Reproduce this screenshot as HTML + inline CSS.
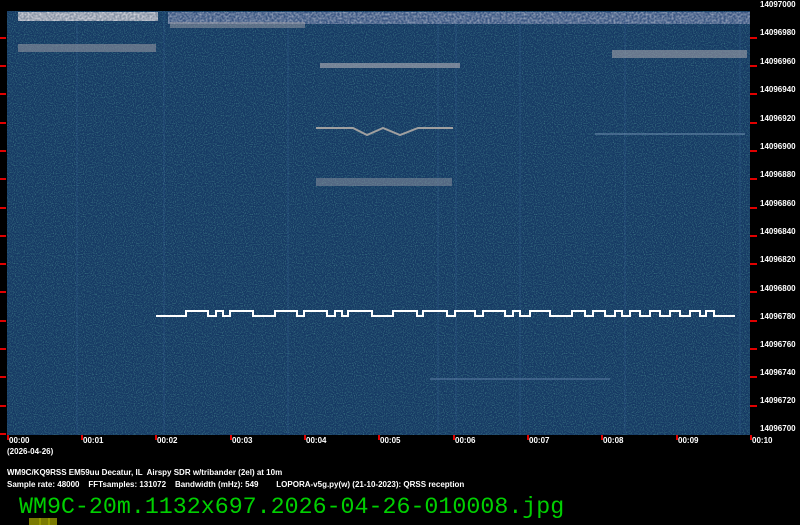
<!DOCTYPE html>
<html><head><meta charset="utf-8"><style>
html,body{margin:0;padding:0;background:#000;width:800px;height:525px;overflow:hidden;position:relative;font-family:"Liberation Sans",sans-serif}
.t{position:absolute;color:#fff;font-size:8px;font-weight:bold;white-space:pre;line-height:9px}
.fn{position:absolute;left:19px;top:494px;color:#00d000;font-family:"Liberation Mono",monospace;font-size:23.3px;white-space:pre}
</style></head><body>
<svg width="800" height="525" style="position:absolute;left:0;top:0">
<defs>
<filter id="n" x="0" y="0" width="100%" height="100%">
<feTurbulence type="fractalNoise" baseFrequency="0.9" numOctaves="1" seed="3"/>
<feColorMatrix values="0 0 0 0 0.1  0 0 0 0 0.36  0 0 0 0 0.38  0 0 0 2.2 -1.0"/>
</filter>
<filter id="g" x="0" y="0" width="100%" height="100%">
<feTurbulence type="fractalNoise" baseFrequency="0.5" numOctaves="1" seed="7"/>
<feColorMatrix values="0 0 0 0 0.75  0 0 0 0 0.75  0 0 0 0 0.8  0 0 0 1.8 -0.6"/>
</filter>
<clipPath id="wf"><rect x="7" y="11" width="743" height="424"/></clipPath>
</defs>
<rect x="7" y="11" width="743" height="424" fill="#14306a"/>
<rect x="7" y="11" width="743" height="424" filter="url(#n)"/>
<rect x="7" y="11" width="743" height="424" fill="#1a4a5a" opacity="0.35"/>
<g clip-path="url(#wf)" opacity="0.25" stroke="#4a78b0" stroke-width="1">
<line x1="77" y1="11" x2="77" y2="435"/><line x1="164" y1="11" x2="164" y2="435"/><line x1="288" y1="11" x2="288" y2="435"/><line x1="438" y1="11" x2="438" y2="435"/><line x1="456" y1="11" x2="456" y2="435"/><line x1="520" y1="11" x2="520" y2="435"/><line x1="625" y1="11" x2="625" y2="435"/><line x1="740" y1="11" x2="740" y2="435"/>
</g>
<g>
<rect x="18" y="12" width="140" height="9" fill="#b8b8c0" opacity="0.7"/>
<rect x="168" y="12" width="582" height="12" fill="#6070a0" opacity="0.5"/>
<rect x="168" y="12" width="582" height="12" filter="url(#g)" opacity="0.6"/>
<rect x="18" y="12" width="140" height="9" filter="url(#g)"/>
<rect x="170" y="22" width="135" height="6" fill="#a0a0a8" opacity="0.5"/>
<rect x="18" y="44" width="138" height="8" fill="#9a9aa4" opacity="0.55"/>
<rect x="320" y="63" width="140" height="5" fill="#a8a8b0" opacity="0.65"/>
<rect x="612" y="50" width="135" height="8" fill="#a0a0a8" opacity="0.6"/>
<rect x="316" y="178" width="136" height="8" fill="#a0a0a8" opacity="0.45"/>
<rect x="595" y="133" width="150" height="2" fill="#7090b0" opacity="0.5"/>
<rect x="430" y="378" width="180" height="2" fill="#6080a8" opacity="0.5"/>
</g>
<polyline points="316,128 353,128 367,135 383,128 400,135 418,128 453,128" fill="none" stroke="#a0a0a0" stroke-width="2"/>
<path fill="none" stroke="#fff" stroke-width="2" d="M156 316H186V311H208V316H216V311H223V316H230V311H253V316H275V311H297V316H304V311H327V316H335V311H342V316H348V311H372V316H393V311H417V316H423V311H447V316H455V311H475V316H483V311H505V316H513V311H520V316H530V311H550V316H572V311H585V316H593V311H605V316H615V311H622V316H630V311H640V316H650V311H660V316H670V311H680V316H690V311H700V316H706V311H714V316H735"/>
<g stroke="#e00000" stroke-width="2">
<path d="M0 38h6M0 66h6M0 94h6M0 123h6M0 151h6M0 179h6M0 208h6M0 236h6M0 264h6M0 292h6M0 321h6M0 349h6M0 377h6M0 406h6M0 434h6"/>
<path d="M750 38h7M750 66h7M750 94h7M750 123h7M750 151h7M750 179h7M750 208h7M750 236h7M750 264h7M750 292h7M750 321h7M750 349h7M750 377h7M750 406h7"/>
<path d="M8 435v5M82 435v5M156 435v5M231 435v5M305 435v5M379 435v5M454 435v5M528 435v5M602 435v5M677 435v5M751 435v5"/>
</g>
<rect x="29" y="518" width="28" height="7" fill="#7a7a00"/>
<path d="M40 518v7M49 518v7" stroke="#b0b000"/>
</svg>
<div class="t" style="left:760px;top:0">14097000</div>
<div class="t" style="left:760px;top:28px">14096980</div>
<div class="t" style="left:760px;top:57px">14096960</div>
<div class="t" style="left:760px;top:85px">14096940</div>
<div class="t" style="left:760px;top:114px">14096920</div>
<div class="t" style="left:760px;top:142px">14096900</div>
<div class="t" style="left:760px;top:170px">14096880</div>
<div class="t" style="left:760px;top:199px">14096860</div>
<div class="t" style="left:760px;top:227px">14096840</div>
<div class="t" style="left:760px;top:255px">14096820</div>
<div class="t" style="left:760px;top:284px">14096800</div>
<div class="t" style="left:760px;top:312px">14096780</div>
<div class="t" style="left:760px;top:340px">14096760</div>
<div class="t" style="left:760px;top:368px">14096740</div>
<div class="t" style="left:760px;top:396px">14096720</div>
<div class="t" style="left:760px;top:424px">14096700</div>
<div class="t" style="left:9px;top:436px">00:00</div>
<div class="t" style="left:83px;top:436px">00:01</div>
<div class="t" style="left:157px;top:436px">00:02</div>
<div class="t" style="left:232px;top:436px">00:03</div>
<div class="t" style="left:306px;top:436px">00:04</div>
<div class="t" style="left:380px;top:436px">00:05</div>
<div class="t" style="left:455px;top:436px">00:06</div>
<div class="t" style="left:529px;top:436px">00:07</div>
<div class="t" style="left:603px;top:436px">00:08</div>
<div class="t" style="left:678px;top:436px">00:09</div>
<div class="t" style="left:752px;top:436px">00:10</div>
<div class="t" style="left:7px;top:447px">(2026-04-26)</div>
<div class="t" style="left:7px;top:468px">WM9C/KQ9RSS EM59uu Decatur, IL  Airspy SDR w/tribander (2el) at 10m</div>
<div class="t" style="left:7px;top:480px">Sample rate: 48000    FFTsamples: 131072    Bandwidth (mHz): 549        LOPORA-v5g.py(w) (21-10-2023): QRSS reception</div>
<div class="fn">WM9C-20m.1132x697.2026-04-26-010008.jpg</div>
</body></html>
